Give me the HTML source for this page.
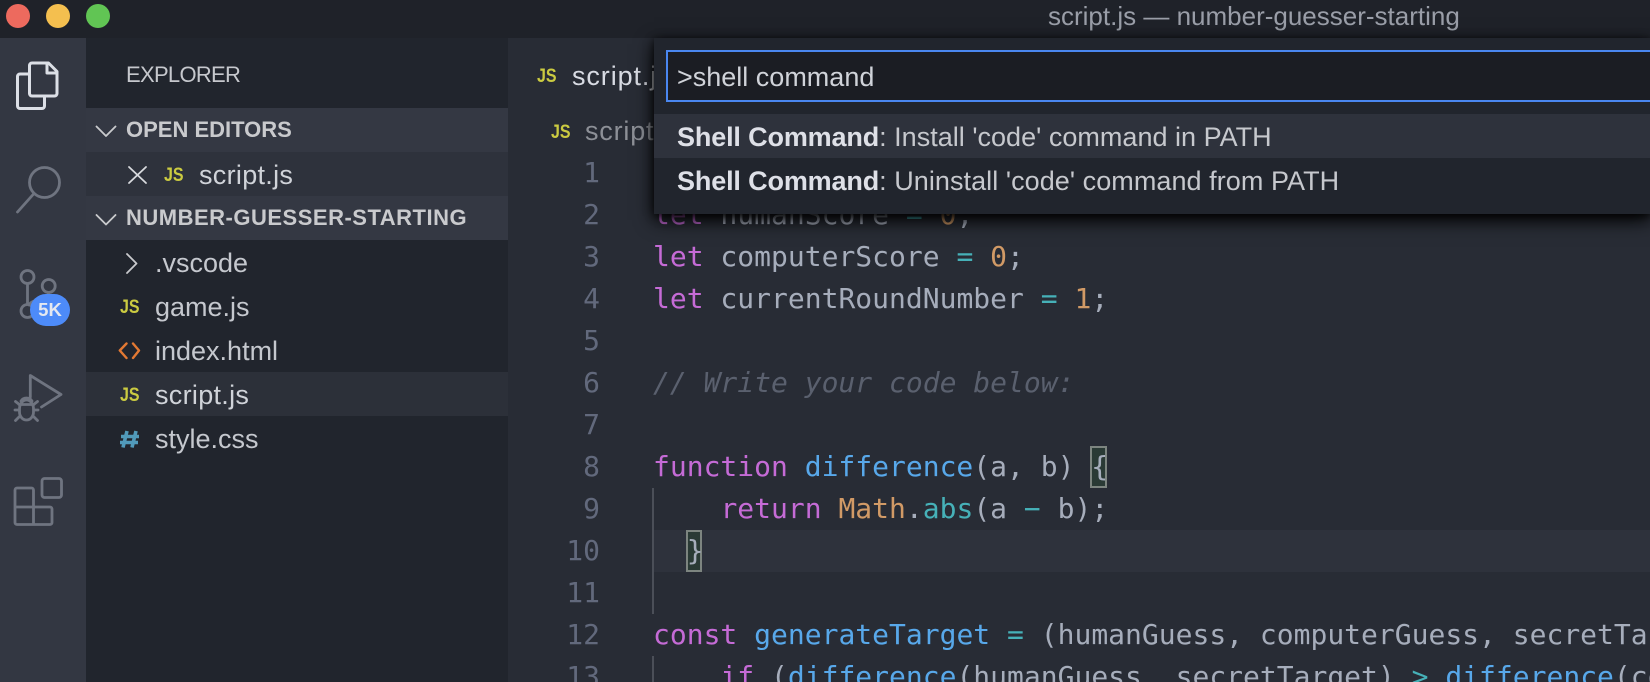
<!DOCTYPE html>
<html><head><meta charset="utf-8"><style>
*{margin:0;padding:0;box-sizing:border-box}
html,body{width:1650px;height:682px;overflow:hidden;background:#282c35}
body{position:relative;font-family:"Liberation Sans",sans-serif;color:#c5c8ce}
#w{position:absolute;left:0;top:0;width:1650px;height:682px;overflow:hidden}
.a{position:absolute;white-space:pre}
.r{position:absolute;left:86px;width:422px;height:44px}
.t{position:absolute;white-space:pre;font-size:27px;line-height:46px;height:44px}
.js{position:absolute;white-space:pre;font-weight:700;font-size:19.5px;color:#cbcb41;line-height:46px;transform:scaleX(.82);transform-origin:0 50%}
.h{position:absolute;white-space:pre;font-weight:700;font-size:22px;line-height:44px;color:#c9cacd}
.ln{position:absolute;left:540px;width:60px;text-align:right;font:28px/42px "DejaVu Sans Mono",monospace;color:#62697c}
.c{position:absolute;left:653px;white-space:pre;font:28px/42px "DejaVu Sans Mono",monospace;color:#a6adbb}
.k{color:#c56bd6}.f{color:#58a8ea}.o{color:#46b1b8}.n{color:#d19a66}.m{color:#5a606e;font-style:italic}
.b{font-weight:700;color:#dee0e7;letter-spacing:-.15px}
</style></head><body><div id="w">
<div class="a" style="left:0;top:0;width:1650px;height:38px;background:#1f2229"></div>
<div class="a" style="left:6px;top:4px;width:24px;height:24px;border-radius:50%;background:#ed6a5e"></div>
<div class="a" style="left:46px;top:4px;width:24px;height:24px;border-radius:50%;background:#f4bf4f"></div>
<div class="a" style="left:86px;top:4px;width:24px;height:24px;border-radius:50%;background:#61c554"></div>
<div class="a" style="left:1048px;top:0;font-size:26px;line-height:32px;color:#9a9ea8">script.js — number-guesser-starting</div>

<div class="a" style="left:0;top:38px;width:86px;height:644px;background:#333742"></div>
<div class="a" style="left:86px;top:38px;width:422px;height:644px;background:#21252d"></div>

<svg class="a" style="left:0;top:0" width="86" height="682" fill="none" stroke-linejoin="round" stroke-linecap="round">
<g stroke="#dcdfe6" stroke-width="3">
<path d="M29 74H20a2.500 2.500 0 0 0-2.500 2.500V106a2.500 2.500 0 0 0 2.500 2.500H42a2.500 2.500 0 0 0 2.500-2.500V97"/>
<path d="M32 63H48.500L57 71.500V93.500a2.500 2.500 0 0 1-2.500 2.500H32a2.500 2.500 0 0 1-2.500-2.500V65.500A2.500 2.500 0 0 1 32 63Z"/>
<path d="M47 64V73H56.500"/>
</g>
<g stroke="#6f7480" stroke-width="2.800">
<circle cx="44.500" cy="182.500" r="15"/>
<path d="M34 193.500L17.500 212"/>
<circle cx="27.500" cy="277" r="6.500"/>
<circle cx="48.700" cy="286" r="6.500"/>
<circle cx="27.500" cy="311" r="6.500"/>
<path d="M27.500 284V304M48.700 292.500C48.700 301 32 298 29 305"/>
<path d="M30.300 397V375.500L61 394.500L41.500 407"/>
<path d="M19.500 409a7 9 0 0 1 14 0v3a7 8 0 0 1-14 0ZM21 401a6 5 0 0 1 11 0M19 404.500H34M15.500 401.500L20 405M15 410H19.500M15.500 420.500L20 416M37.500 401.500L33 405M38 410H33.500M37.500 420.500L33 416"/>
<rect x="42" y="478.500" width="19.500" height="19" rx="2.500"/>
<path d="M33.500 507V490a2 2 0 0 0-2-2H17a2 2 0 0 0-2 2V522.500a2 2 0 0 0 2 2H50a2 2 0 0 0 2-2V509a2 2 0 0 0-2-2H15M33.500 507V524"/>
</g>
</svg>
<div class="a" style="left:30px;top:294px;width:40px;height:32px;border-radius:16px;background:#4d8bf9;color:#e4e8f0;font-weight:700;font-size:18.500px;line-height:32px;text-align:center">5K</div>

<div class="a" style="left:126px;top:59px;font-size:22px;letter-spacing:-.7px;line-height:32px;color:#c6c8cd">EXPLORER</div>

<div class="r" style="top:108px;background:#343843"></div>
<div class="h" style="left:126px;top:108px">OPEN EDITORS</div>
<div class="r" style="top:152px;background:#2e323c"></div>
<div class="js" style="left:163.500px;top:152px">JS</div>
<div class="t" style="left:199px;top:152px;letter-spacing:.3px;color:#d0d3d9">script.js</div>
<div class="r" style="top:196px;background:#343843"></div>
<div class="h" style="left:126px;top:196px;letter-spacing:.5px">NUMBER-GUESSER-STARTING</div>
<div class="t" style="left:155px;top:240px;color:#c5c8ce">.vscode</div>
<div class="js" style="left:120px;top:284px">JS</div>
<div class="t" style="left:155px;top:284px">game.js</div>
<div class="t" style="left:155px;top:328px">index.html</div>
<div class="r" style="top:372px;background:#2c3039"></div>
<div class="js" style="left:120px;top:372px">JS</div>
<div class="t" style="left:155px;top:372px;letter-spacing:.3px;color:#d0d3d9">script.js</div>
<div class="t" style="left:155px;top:416px">style.css</div>

<svg class="a" style="left:86px;top:0" width="422" height="682" fill="none" stroke-linecap="round" stroke-linejoin="round">
<g stroke="#c9cacd" stroke-width="1.800">
<path d="M10.500 126.500L20 136L29.500 126.500M10.500 215L20 224.500L29.500 215"/>
<path d="M43 167L60 183M60 167L43 183" stroke="#d8dade"/>
<path d="M41 254L50.500 263.500L41 273"/>
</g>
<path d="M40.500 343.500L33.800 350.500L40.500 358M47 343.500L53 350.500L47 358" stroke="#e37933" stroke-width="2.400"/>
<path d="M41 431L37 447.500M50 431L46 447.500M35 436.500H53M34 442.500H52" stroke="#519aba" stroke-width="3.600" stroke-linecap="butt"/>
</svg>

<div class="js" style="left:537px;top:53px">JS</div>
<div class="t" style="left:572px;top:53px;letter-spacing:.9px;color:#d8dbe3">script.js</div>
<div class="js" style="left:551px;top:109px">JS</div>
<div class="t" style="left:585px;top:108px;letter-spacing:.8px;color:#8d9097">script.js</div>

<div class="a" style="left:654px;top:530px;width:996px;height:42px;background:#2e323c"></div>
<div class="a" style="left:652px;top:488px;width:2px;height:126px;background:#4b4f58"></div>
<div class="a" style="left:652px;top:656px;width:2px;height:26px;background:#4b4f58"></div>
<div class="a" style="left:1090px;top:446px;width:17px;height:42px;background:#2a3a35;border:2px solid #7d8580"></div>
<div class="a" style="left:686px;top:530px;width:16px;height:42px;background:#2a3a35;border:2px solid #7d8580"></div>

<div class="ln" style="top:152px">1</div><div class="c" style="top:152px"><span class="k">let</span> target;</div>
<div class="ln" style="top:194px">2</div><div class="c" style="top:194px"><span class="k">let</span> humanScore <span class="o">=</span> <span class="n">0</span>;</div>
<div class="ln" style="top:236px">3</div><div class="c" style="top:236px"><span class="k">let</span> computerScore <span class="o">=</span> <span class="n">0</span>;</div>
<div class="ln" style="top:278px">4</div><div class="c" style="top:278px"><span class="k">let</span> currentRoundNumber <span class="o">=</span> <span class="n">1</span>;</div>
<div class="ln" style="top:320px">5</div>
<div class="ln" style="top:362px">6</div><div class="c m" style="top:362px">// Write your code below:</div>
<div class="ln" style="top:404px">7</div>
<div class="ln" style="top:446px">8</div><div class="c" style="top:446px"><span class="k">function</span> <span class="f">difference</span>(a, b) {</div>
<div class="ln" style="top:488px">9</div><div class="c" style="top:488px">    <span class="k">return</span> <span class="n">Math</span>.<span class="o">abs</span>(a <span class="o">−</span> b);</div>
<div class="ln" style="top:530px">10</div><div class="c" style="top:530px">  }</div>
<div class="ln" style="top:572px">11</div>
<div class="ln" style="top:614px">12</div><div class="c" style="top:614px"><span class="k">const</span> <span class="f">generateTarget</span> <span class="o">=</span> (humanGuess, computerGuess, secretTarget) <span class="o">=&gt;</span> {</div>
<div class="ln" style="top:656px">13</div><div class="c" style="top:656px">    <span class="k">if</span> (<span class="f">difference</span>(humanGuess, secretTarget) <span class="o">&gt;</span> <span class="f">difference</span>(computerGuess, secretTarget)) {</div>

<div class="a" style="left:654px;top:38px;width:996px;height:176px;background:#21252d;box-shadow:0 6px 18px #000,0 2px 8px rgba(0,0,0,.7)"></div>
<div class="a" style="left:666px;top:50px;width:984px;height:52px;background:#1b1d23;border:2px solid #4a87f0;border-right:0"></div>
<div class="a" style="left:677px;top:50px;font-size:27px;line-height:54px;color:#d0d3d9">&gt;shell command</div>
<div class="a" style="left:654px;top:114px;width:996px;height:44px;background:#2e323c"></div>
<div class="t" style="left:677px;top:114px;letter-spacing:.02px;color:#c6c8cd"><span class="b">Shell Command</span>: Install 'code' command in PATH</div>
<div class="t" style="left:677px;top:158px;letter-spacing:.06px;color:#c6c8cd"><span class="b">Shell Command</span>: Uninstall 'code' command from PATH</div>
</div></body></html>
